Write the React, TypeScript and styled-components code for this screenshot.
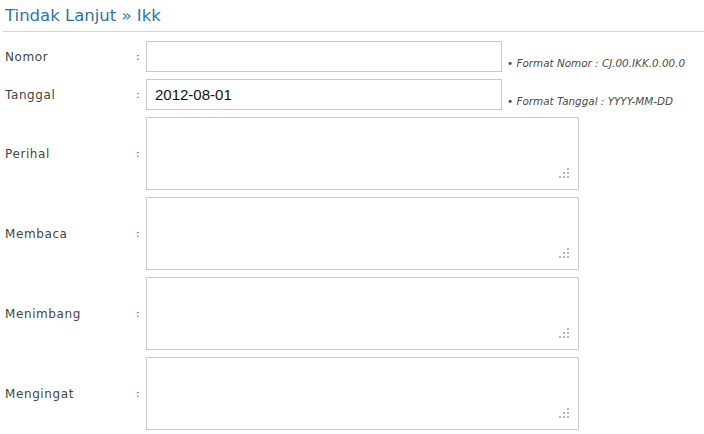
import { createGlobalStyle } from 'styled-components';
import styled from 'styled-components';

const GlobalStyle = createGlobalStyle`
    body {
        margin: 0;
        background: #ffffff;
        font-family: 'DejaVu Sans', sans-serif;
    }
`;

const Wrapper = styled.div`
    width: 704px;
    height: 434px;
    overflow: hidden;
    background: #ffffff;
`;

const Heading = styled.h2`
    margin: 0 0 0 3px;
    padding: 5px 0 5px 2px;
    font-family: 'DejaVu Sans', sans-serif;
    font-size: 16.5px;
    line-height: 21px;
    font-weight: normal;
    color: #2b74a6;
    border-bottom: 1px solid #d6d6d6;
`;

const Form = styled.div`
    display: grid;
    grid-template-columns: 133px 13px 433px 1fr;
    row-gap: 7px;
    margin-top: 9px;
`;

const Label = styled.div`
    padding-left: 5px;
    align-self: center;
    font-family: 'DejaVu Sans', sans-serif;
    font-size: 12px;
    letter-spacing: 0.6px;
    color: #444444;
`;

const Colon = styled.div`
    align-self: center;
    font-family: 'DejaVu Sans', sans-serif;
    font-size: 11px;
    color: #444;
    padding-left: 3px;
`;

const FieldCell = styled.div`
    position: relative;
`;

const TextInput = styled.input`
    box-sizing: border-box;
    width: 356px;
    height: 31px;
    margin: 0;
    padding: 0 8px;
    border: 1px solid #c9c9c9;
    background: #fff;
    font-family: 'Liberation Sans', Arial, sans-serif;
    font-size: 15px;
    color: #111;
    outline: none;
`;

const TextArea = styled.textarea`
    display: block;
    box-sizing: border-box;
    width: 433px;
    height: 73px;
    margin: 0;
    padding: 4px;
    border: 1px solid #c9c9c9;
    background: #fff;
    resize: none;
    outline: none;
    font-family: 'Liberation Sans', Arial, sans-serif;
    font-size: 13px;
`;

const Grip = styled.svg`
    position: absolute;
    right: 10px;
    bottom: 12px;
`;

const Hint = styled.div`
    align-self: end;
    margin-left: -72px;
    padding-bottom: 3px;
    font-family: 'DejaVu Sans', sans-serif;
    font-size: 10.4px;
    font-style: italic;
    color: #4a4a4a;
    white-space: nowrap;
`;

function ResizeGrip() {
    const dots = [
        [8, 0],
        [4, 4],
        [8, 4],
        [0, 8],
        [4, 8],
        [8, 8],
    ];
    return (
        <Grip width="10" height="10" viewBox="0 0 10 10">
            {dots.map(([x, y]) => (
                <rect key={`${x}-${y}`} x={x} y={y} width="2" height="2" fill="#b3b3b3" />
            ))}
        </Grip>
    );
}

const areas = ['Perihal', 'Membaca', 'Menimbang', 'Mengingat'];

function App() {
    return (
        <Wrapper>
            <GlobalStyle />
            <Heading>Tindak Lanjut » Ikk</Heading>
            <Form>
                <Label>Nomor</Label>
                <Colon>:</Colon>
                <FieldCell>
                    <TextInput defaultValue="" />
                </FieldCell>
                <Hint>• Format Nomor : CJ.00.IKK.0.00.0</Hint>

                <Label>Tanggal</Label>
                <Colon>:</Colon>
                <FieldCell>
                    <TextInput defaultValue="2012-08-01" />
                </FieldCell>
                <Hint>• Format Tanggal : YYYY-MM-DD</Hint>

                {areas.map((name) => (
                    <Row key={name} name={name} />
                ))}
            </Form>
        </Wrapper>
    );
}

function Row({ name }: { name: string }) {
    return (
        <>
            <Label>{name}</Label>
            <Colon>:</Colon>
            <FieldCell>
                <TextArea />
                <ResizeGrip />
            </FieldCell>
            <div />
        </>
    );
}

export default App;
